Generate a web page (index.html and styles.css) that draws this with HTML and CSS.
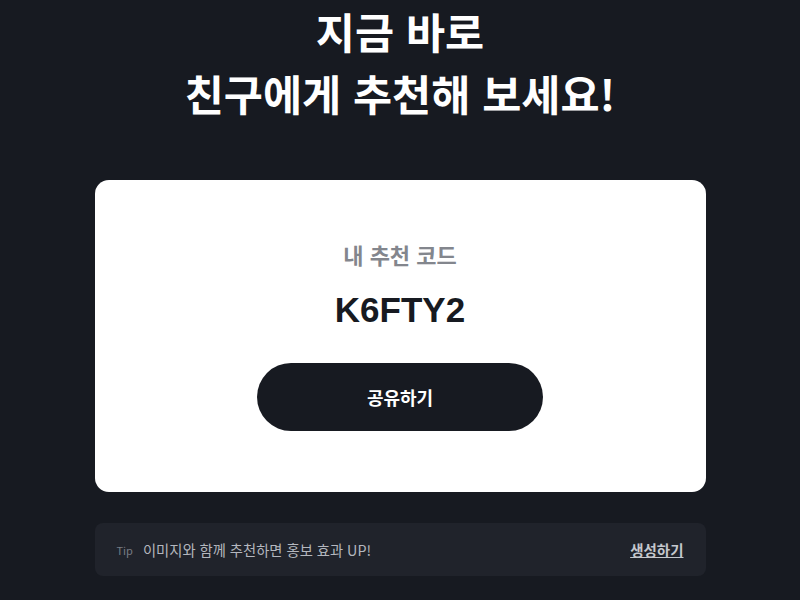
FILE: index.html
```html
<!DOCTYPE html>
<html lang="ko">
  <head>
    <meta charset="UTF-8" />
    <meta name="viewport" content="width=device-width, initial-scale=1.0" />
    <title>친구 추천</title>
    <link rel="stylesheet" href="styles.css">
  </head>
  <body>
    <div class="page">
      <h1 class="title">지금 바로<br />친구에게 추천해 보세요!</h1>

      <div class="code-card">
        <p class="code-label">내 추천 코드</p>
        <p class="code-value">K6FTY2</p>
        <button class="share-btn">공유하기</button>
      </div>

      <div class="tip-box">
        <span class="tip-tag">Tip</span>
        <span class="tip-text">이미지와 함께 추천하면 홍보 효과 UP!</span>
        <a class="tip-link" href="#">생성하기</a>
      </div>
    </div>
  </body>
</html>
```

FILE: styles.css
```css
body {
  margin: 0;
  background-color: #171a21;
  font-family: "Noto Sans CJK KR", "Noto Sans", sans-serif;
  color: white;
}
.page {
  width: 611px;
  margin: 0 auto;
}
.title {
  margin: 0;
  font-size: 42.5px;
  line-height: 62px;
  font-weight: 700;
  text-align: center;
}
.code-card {
  margin-top: 56px;
  height: 312px;
  box-sizing: border-box;
  background: white;
  border-radius: 14px;
  display: flex;
  flex-direction: column;
  align-items: center;
  padding-top: 58px;
}
.code-label {
  margin: 0;
  font-size: 22px;
  line-height: 32px;
  font-weight: 700;
  color: #83868d;
}
.code-value {
  margin: 19px 0 0;
  font-family: "Liberation Sans", Arial, sans-serif;
  font-size: 35px;
  line-height: 42px;
  font-weight: 700;
  color: #171a21;
}
.share-btn {
  margin-top: 32px;
  width: 286px;
  height: 68px;
  border: none;
  border-radius: 999px;
  background: #171a21;
  color: white;
  font-family: inherit;
  font-size: 18px;
  font-weight: 700;
  cursor: pointer;
}
.tip-box {
  margin-top: 31px;
  height: 53px;
  background: #20232b;
  border-radius: 8px;
  display: flex;
  align-items: center;
  padding: 0 22px;
}
.tip-tag {
  font-size: 11px;
  color: #777b84;
  margin-right: 10px;
}
.tip-text {
  font-size: 14.3px;
  color: #b4b7be;
  flex: 1;
}
.tip-link {
  font-size: 14.5px;
  font-weight: 700;
  color: #c4c7cd;
}
```
